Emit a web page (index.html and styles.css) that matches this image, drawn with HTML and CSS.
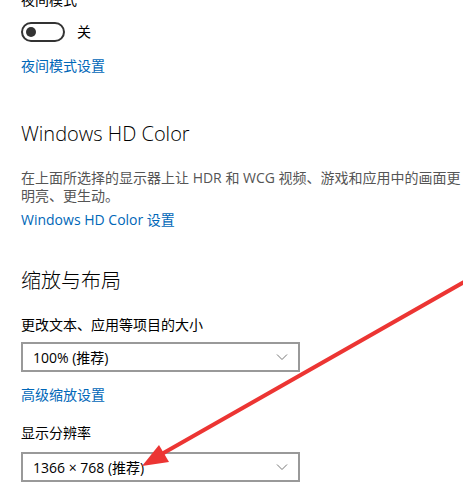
FILE: index.html
```html
<!DOCTYPE html>
<html lang="zh-CN">
<head>
    <meta charset="UTF-8">
    <meta name="viewport" content="width=device-width, initial-scale=1.0">
    <title>显示设置</title>
    <link rel="stylesheet" href="styles.css">
</head>
<body>

<div class="settings">
    <div class="label cut">夜间模式</div>
    <div class="toggle-row">
        <div class="toggle"><span class="knob"></span></div>
        <span class="toggle-text">关</span>
    </div>
    <a class="link night-link" href="#">夜间模式设置</a>

    <div class="heading hd-heading">Windows HD Color</div>
    <p class="desc">在上面所选择的显示器上让 HDR 和 WCG 视频、游戏和应用中的画面更明亮、更生动。</p>
    <a class="link hd-link" href="#">Windows HD Color 设置</a>

    <div class="heading scale-heading">缩放与布局</div>
    <div class="label size-label">更改文本、应用等项目的大小</div>
    <div class="select size-select">
        <span>100% (推荐)</span>
        <svg class="chevron" width="12" height="8" viewBox="0 0 12 8"><path d="M1 1.5 L6 6.5 L11 1.5" fill="none" stroke="#777" stroke-width="1"/></svg>
    </div>
    <a class="link adv-link" href="#">高级缩放设置</a>

    <div class="label res-label">显示分辨率</div>
    <div class="select res-select">
        <span>1366 × 768 (推荐)</span>
        <svg class="chevron" width="12" height="8" viewBox="0 0 12 8"><path d="M1 1.5 L6 6.5 L11 1.5" fill="none" stroke="#777" stroke-width="1"/></svg>
    </div>
</div>

<!-- red annotation arrow drawn over the page -->
<svg class="arrow" width="463" height="490" viewBox="0 0 463 490">
    <line x1="480" y1="273" x2="160" y2="455" stroke="#ec3533" stroke-width="4" stroke-linecap="round"/>
    <polygon points="142,466 159,445 169,462" fill="#ec3533"/>
</svg>

</body>
</html>
```

FILE: styles.css
```css
body {
    margin: 0;
    background-color: #fff;
    font-family: "Open Sans", "Noto Sans CJK SC", sans-serif;
    color: #000;
    overflow: hidden;
    height: 490px;
    position: relative;
}
.settings {
    padding: 0 0 0 21px;
    display: flex;
    flex-direction: column;
    align-items: flex-start;
}
.label {
    font-size: 14px;
    line-height: 20px;
}
.cut {
    margin-top: -10px;
}
.toggle-row {
    display: flex;
    align-items: center;
    gap: 12px;
    margin-top: 12px;
    height: 20px;
}
.toggle {
    box-sizing: border-box;
    width: 44px;
    height: 20px;
    border: 2px solid #333;
    border-radius: 10px;
    display: flex;
    align-items: center;
    padding-left: 3px;
}
.knob {
    width: 10px;
    height: 10px;
    border-radius: 50%;
    background-color: #333;
}
.toggle-text {
    font-size: 14px;
    line-height: 20px;
}
.link {
    font-size: 14px;
    line-height: 20px;
    color: #0067b8;
    text-decoration: none;
}
.night-link {
    margin-top: 14px;
}
.heading {
    font-size: 20px;
    line-height: 28px;
    font-weight: 300;
}
.hd-heading {
    margin-top: 44px;
}
.desc {
    margin: 21px 0 0 0;
    font-size: 14px;
    line-height: 18px;
    color: #555;
    width: 442px;
}
.hd-link {
    margin-top: 5px;
}
.scale-heading {
    margin-top: 37px;
}
.size-label {
    margin-top: 20px;
}
.select {
    box-sizing: border-box;
    width: 279px;
    height: 30px;
    border: 2px solid #999;
    display: flex;
    align-items: center;
    justify-content: space-between;
    padding: 0 10px 0 10px;
    font-size: 14px;
}
.size-select {
    margin-top: 7px;
}
.adv-link {
    margin-top: 13px;
}
.res-label {
    margin-top: 18px;
}
.res-select {
    margin-top: 9px;
}
.arrow {
    position: absolute;
    top: 0;
    left: 0;
}
```
